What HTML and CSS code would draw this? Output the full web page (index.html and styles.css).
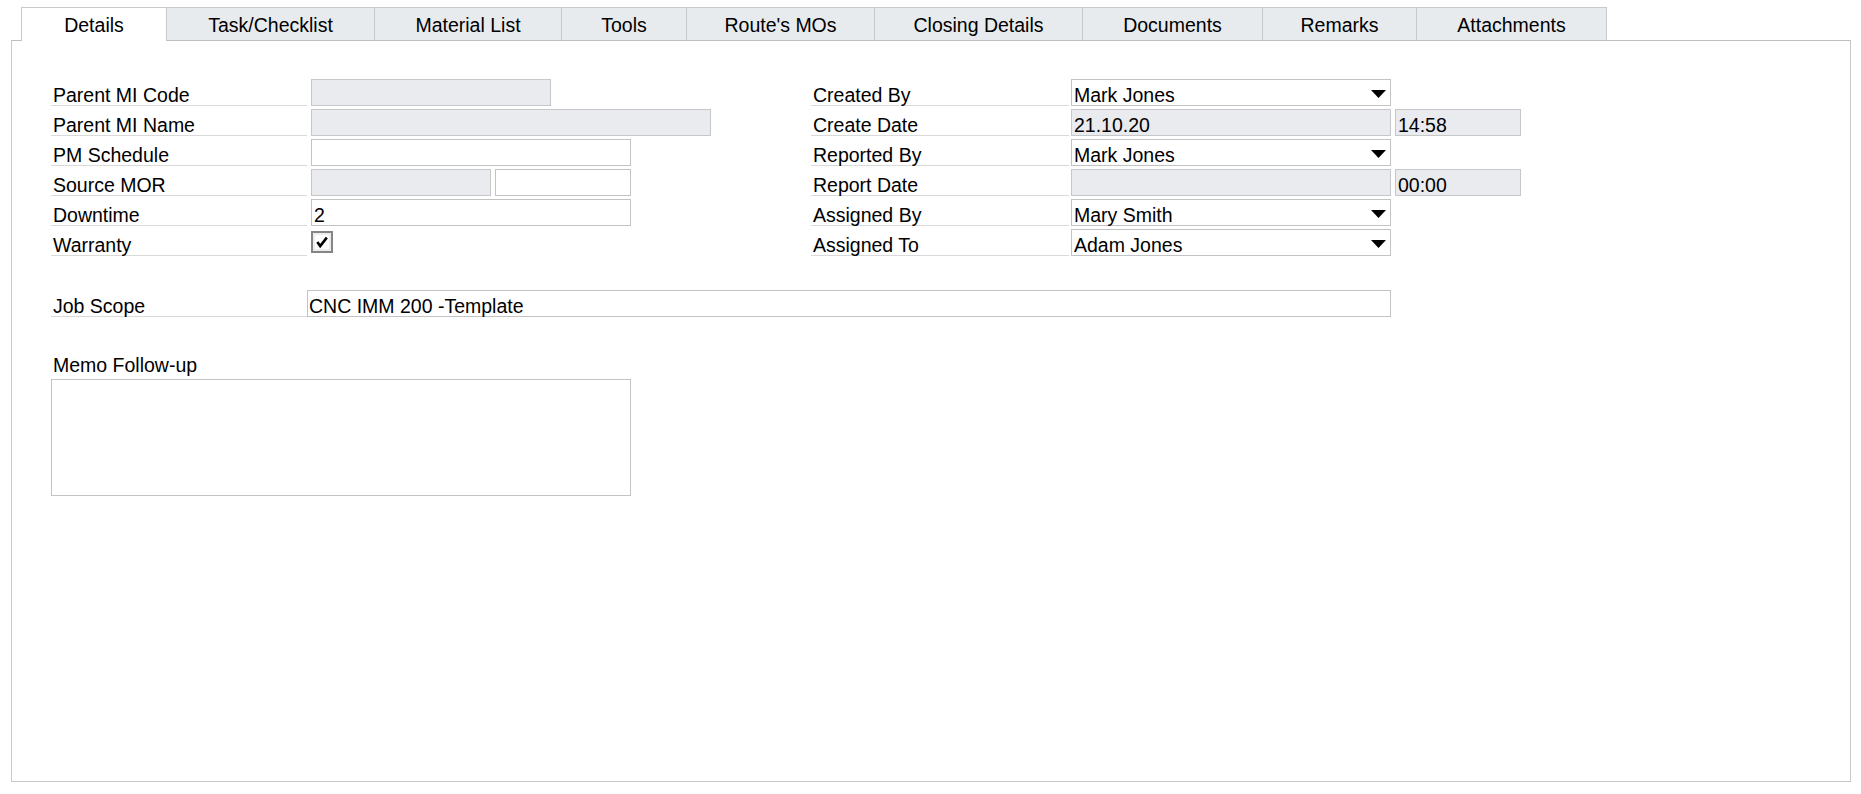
FILE: index.html
```html
<!DOCTYPE html>
<html>
<head>
<meta charset="utf-8">
<link rel="stylesheet" href="styles.css">
</head>
<body>
<div class="window">
  <div class="tabs">
    <div class="tab active w-details">Details</div>
    <div class="tab w-task">Task/Checklist</div>
    <div class="tab w-material">Material List</div>
    <div class="tab w-tools">Tools</div>
    <div class="tab w-route">Route's MOs</div>
    <div class="tab w-closing">Closing Details</div>
    <div class="tab w-docs">Documents</div>
    <div class="tab w-remarks">Remarks</div>
    <div class="tab w-attach">Attachments</div>
  </div>
  <div class="panel">
    <div class="cols">
      <div class="col col-left">
        <div class="row"><div class="label">Parent MI Code</div><div class="field ro w240"></div></div>
        <div class="row"><div class="label">Parent MI Name</div><div class="field ro w400"></div></div>
        <div class="row"><div class="label">PM Schedule</div><div class="field w320"></div></div>
        <div class="row"><div class="label">Source MOR</div><div class="pair"><div class="field ro w180"></div><div class="field w136"></div></div></div>
        <div class="row"><div class="label">Downtime</div><div class="field w320">2</div></div>
        <div class="row"><div class="label">Warranty</div>
          <div class="check">
            <svg width="22" height="22" viewBox="0 0 22 22"><rect x="1" y="1" width="20" height="20" fill="#fff" stroke="#858585" stroke-width="2"/><rect x="3" y="3" width="16" height="16" fill="none" stroke="#dcdcdc" stroke-width="1"/><path d="M6.3 11 L9.2 15 L15.8 6.6" fill="none" stroke="#000" stroke-width="2.6" stroke-linejoin="miter"/></svg>
          </div>
        </div>
      </div>
      <div class="col col-right">
        <div class="row"><div class="label rl">Created By</div><div class="field w320 drop">Mark Jones<svg class="arrow" width="15" height="8" viewBox="0 0 15 8"><path d="M0 0 H15 L7.5 8 Z" fill="#000"/></svg></div></div>
        <div class="row"><div class="label rl">Create Date</div><div class="field ro w320">21.10.20</div><div class="field ro w126">14:58</div></div>
        <div class="row"><div class="label rl">Reported By</div><div class="field w320 drop">Mark Jones<svg class="arrow" width="15" height="8" viewBox="0 0 15 8"><path d="M0 0 H15 L7.5 8 Z" fill="#000"/></svg></div></div>
        <div class="row"><div class="label rl">Report Date</div><div class="field ro w320"></div><div class="field ro w126">00:00</div></div>
        <div class="row"><div class="label rl">Assigned By</div><div class="field w320 drop">Mary Smith<svg class="arrow" width="15" height="8" viewBox="0 0 15 8"><path d="M0 0 H15 L7.5 8 Z" fill="#000"/></svg></div></div>
        <div class="row"><div class="label rl">Assigned To</div><div class="field w320 drop">Adam Jones<svg class="arrow" width="15" height="8" viewBox="0 0 15 8"><path d="M0 0 H15 L7.5 8 Z" fill="#000"/></svg></div></div>
      </div>
    </div>
    <div class="row jobscope"><div class="label tight">Job Scope</div><div class="field w1084 scope">CNC IMM 200 -Template</div></div>
    <div class="memo-label">Memo Follow-up</div>
    <div class="memo"></div>
  </div>
</div>
</body>
</html>
```

FILE: styles.css
```css
* { box-sizing: border-box; }
html, body { margin: 0; padding: 0; background: #fff; }
body {
  font-family: "Liberation Sans", Arial, sans-serif;
  font-size: 19.5px;
  color: #000;
}
.window {
  margin-left: 11px;
  padding-top: 7px;
  width: 1840px;
}
.tabs {
  display: flex;
  align-items: flex-start;
  padding-left: 10px;
}
.tab {
  height: 33px;
  padding-top: 2px;
  line-height: 31px;
  text-align: center;
  background: #e8ebee;
  border-top: 1px solid #c9c9c9;
  border-right: 1px solid #c9c9c9;
  white-space: nowrap;
}
.tab:first-child { border-left: 1px solid #c9c9c9; }
.tab.active {
  position: relative;
  z-index: 1;
  height: 34px;
  margin-bottom: -1px;
  background: #fff;
}
.w-details { width: 146px; }
.w-task { width: 208px; }
.w-material { width: 187px; }
.w-tools { width: 125px; }
.w-route { width: 188px; }
.w-closing { width: 208px; }
.w-docs { width: 180px; }
.w-remarks { width: 154px; }
.w-attach { width: 190px; }

.panel {
  height: 742px;
  border: 1px solid #c9c9c9;
  border-top-color: #bdbdbd;
  padding: 38px 0 0 39px;
}
.cols { display: flex; }
.col { display: flex; flex-direction: column; gap: 3px; }
.col-left { width: 760px; }
.row { display: flex; height: 27px; }
.label {
  width: 256px;
  height: 27px;
  margin-right: 4px;
  padding: 4px 0 0 2px;
  line-height: 25px;
  border-bottom: 1px solid #d9d9d9;
  white-space: nowrap;
}
.label.rl { width: 258px; margin-right: 2px; }
.label.tight { margin-right: 0; }
.field {
  height: 27px;
  border: 1px solid #c3c3c3;
  background: #fff;
  padding: 3px 0 0 2px;
  line-height: 25px;
  white-space: nowrap;
  position: relative;
}
.field.ro { background: #e9ebee; border-color: #c6c7c8; }
.w240 { width: 240px; }
.w400 { width: 400px; }
.w320 { width: 320px; }
.w180 { width: 180px; }
.w136 { width: 136px; }
.w126 { width: 126px; margin-left: 4px; }
.w1084 { width: 1084px; }
.pair { display: flex; gap: 4px; }
.check { padding-top: 2px; height: 27px; }
.check svg { display: block; }
.drop .arrow {
  position: absolute;
  right: 4px;
  top: 10px;
}
.jobscope { margin-top: 34px; }
.scope { padding-left: 1px; }
.memo-label {
  margin-top: 32px;
  height: 27px;
  padding: 4px 0 0 2px;
  line-height: 25px;
}
.memo {
  margin-top: 3px;
  width: 580px;
  height: 117px;
  border: 1px solid #c3c3c3;
  background: #fff;
}
```
